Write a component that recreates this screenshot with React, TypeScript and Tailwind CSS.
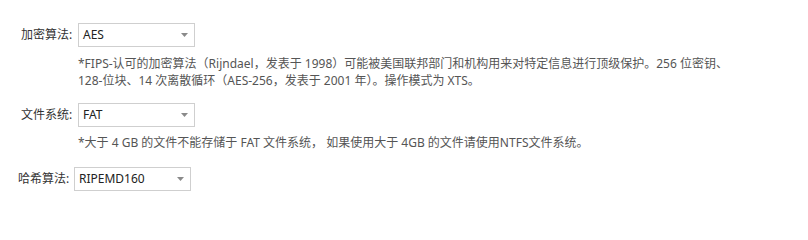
import React from "react";

const font = { fontFamily: '"Noto Sans", "Noto Sans CJK SC", sans-serif' };

function Select({ value }: { value: string }) {
  return (
    <div className="flex h-[24px] w-[117px] items-center justify-between border border-[#cfcfcf] bg-white pl-[4px] pr-[6px]">
      <span className="text-[12px] leading-none text-[#222]">{value}</span>
      <svg width="7" height="4" viewBox="0 0 7 4" className="block">
        <path d="M0 0 L7 0 L3.5 4 Z" fill="#8a8a8a" />
      </svg>
    </div>
  );
}

export default function App() {
  return (
    <div
      className="h-[228px] w-[808px] bg-white pt-[23px] text-[12px] text-[#333]"
      style={font}
    >
      <div className="pl-[21px]">
        <div className="flex items-center">
          <span className="w-[51px] whitespace-nowrap">加密算法:</span>
          <div className="ml-[6px]">
            <Select value="AES" />
          </div>
        </div>
        <p className="ml-[57px] mt-[8px] leading-[17px] text-[#555]">
          *FIPS-认可的加密算法（Rijndael，发表于 1998）可能被美国联邦部门和机构用来对特定信息进行顶级保护。256 位密钥、
          <br />
          128-位块、14 次离散循环（AES-256，发表于 2001 年）。操作模式为 XTS。
        </p>

        <div className="mt-[14px] flex items-center">
          <span className="w-[51px] whitespace-nowrap">文件系统:</span>
          <div className="ml-[6px]">
            <Select value="FAT" />
          </div>
        </div>
        <p className="ml-[57px] mt-[7px] leading-[17px] text-[#555]">
          *大于 4 GB 的文件不能存储于 FAT 文件系统， 如果使用大于 4GB 的文件请使用NTFS文件系统。
        </p>
      </div>

      <div className="mt-[16px] flex items-center pl-[18px]">
        <span className="w-[51px] whitespace-nowrap">哈希算法:</span>
        <div className="ml-[5px]">
          <Select value="RIPEMD160" />
        </div>
      </div>
    </div>
  );
}
